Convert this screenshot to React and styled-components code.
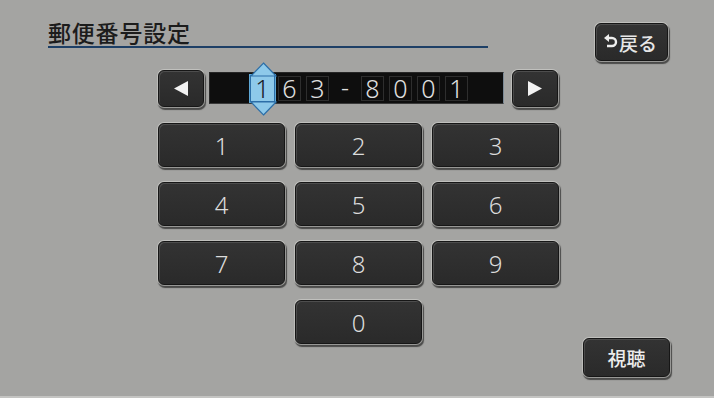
import React from "react";
import styled, { createGlobalStyle } from "styled-components";

const Global = createGlobalStyle`
  html, body { margin: 0; padding: 0; background: #a4a4a2; }
  body { font-family: "Noto Sans CJK JP", "Noto Sans", sans-serif; }
`;

const Screen = styled.div`
  width: 714px;
  height: 398px;
  box-sizing: border-box;
  background: #a4a4a2;
  border-bottom: 2px solid #c4c4c2;
  display: flex;
  flex-direction: column;
  overflow: hidden;
`;

const Header = styled.div`
  display: flex;
  align-items: flex-start;
  padding: 23px 46px 0 48px;
  height: 62px;
  box-sizing: border-box;
`;

const Title = styled.h1`
  margin: -3px 0 0 0;
  width: 440px;
  font-size: 23px;
  line-height: 24px;
  font-weight: 500;
  color: #1c1c1c;
  padding-bottom: 2px;
  border-bottom: 2px solid #1d3f66;
  letter-spacing: 0.8px;
`;

const Button = styled.button`
  appearance: none;
  box-sizing: border-box;
  margin: 0;
  padding: 0;
  border: 1px solid #161616;
  border-radius: 6px;
  background: linear-gradient(#333333, #2a2a2a);
  color: #dedede;
  font-family: "Noto Sans CJK JP", "Noto Sans", sans-serif;
  display: flex;
  align-items: center;
  justify-content: center;
  box-shadow:
    0 0 0 1px rgba(215, 215, 212, 0.55),
    1px 2px 1px 1px rgba(0, 0, 0, 0.55),
    inset 1px 1px 0 rgba(255, 255, 255, 0.13);
`;

const BackButton = styled(Button)`
  margin-left: auto;
  width: 73px;
  height: 38px;
  font-size: 19px;
  font-weight: 500;
  gap: 1px;
  padding-right: 2px;
  color: #e6e6e6;
`;

const Main = styled.div`
  flex: 1;
  display: flex;
  padding-left: 158px;
`;

const Center = styled.div`
  width: 401px;
  display: flex;
  flex-direction: column;
`;

const InputRow = styled.div`
  margin-top: 8px;
  display: flex;
  align-items: flex-start;
  height: 37px;
`;

const ArrowButton = styled(Button)`
  width: 46px;
  height: 37px;
  margin-left: ${(p) => (p.$right ? "8px" : "0")};
`;

const Field = styled.div`
  margin-left: 5px;
  margin-top: 2px;
  width: 295px;
  height: 32px;
  box-sizing: border-box;
  background: #0e0e0e;
  border: 1px solid #262626;
  border-right-color: #7c8a96;
  border-bottom-color: #3a3a3a;
  display: flex;
  align-items: center;
  padding-left: 40px;
  gap: 5px;
`;

const digitFont = `
  font-family: "Noto Sans", sans-serif;
  font-weight: 300;
  font-size: 25px;
  line-height: 24px;
  text-align: center;
`;

const Cell = styled.div`
  position: relative;
  width: ${(p) => (p.$active ? "25px" : "23px")};
  height: ${(p) => (p.$active ? "27px" : "25px")};
  margin-right: ${(p) => (p.$active ? "-2px" : "0")};
  box-sizing: border-box;
  border: 1px solid ${(p) => (p.$active ? "#2d6fa8" : "#2e2e2e")};
  background: ${(p) => (p.$active ? "#8ec9ea" : "transparent")};
  color: ${(p) => (p.$active ? "#182028" : "#e0e0e0")};
  ${digitFont}
  line-height: ${(p) => (p.$active ? "25px" : "23px")};
  ${(p) => (p.$active ? "outline: 1px solid #5fa8d6;" : "")}
`;

const Dash = styled.div`
  width: 22px;
  height: 25px;
  color: #e0e0e0;
  ${digitFont}
  line-height: 23px;
`;

const Spinner = styled.svg`
  position: absolute;
  left: -3px;
  top: -14px;
  pointer-events: none;
`;

const Keypad = styled.div`
  margin-top: 16px;
  display: grid;
  grid-template-columns: repeat(3, 127px);
  grid-auto-rows: 44px;
  column-gap: 10px;
  row-gap: 15px;
`;

const Key = styled(Button)`
  width: 127px;
  height: 44px;
  font-size: 24px;
  font-family: "Noto Sans", sans-serif;
  font-weight: 300;
  color: #dcdcdc;
  grid-column: ${(p) => p.$col || "auto"};
`;

const Side = styled.div`
  margin-left: 24px;
  display: flex;
  align-items: flex-end;
  padding-bottom: 19px;
`;

const WatchButton = styled(Button)`
  width: 87px;
  height: 39px;
  font-size: 19px;
  font-weight: 500;
  color: #ececec;
`;

const Tri = ({ dir }) => (
  <svg width="16" height="17" viewBox="0 0 16 17">
    {dir === "left" ? (
      <polygon points="1,8.5 15,1 15,16" fill="#f2f2f2" />
    ) : (
      <polygon points="15,8.5 1,1 1,16" fill="#f2f2f2" />
    )}
  </svg>
);

const BackIcon = () => (
  <svg width="14" height="16" viewBox="0 0 14 16">
    <polygon points="0,4 5,0 5,8" fill="#eeeeee" />
    <path
      d="M4 4 H8 A4 4 0 0 1 8 12 H3"
      fill="none"
      stroke="#eeeeee"
      strokeWidth="2.4"
    />
  </svg>
);

export default function App() {
  const digits = ["1", "6", "3", "-", "8", "0", "0", "1"];
  return (
    <>
      <Global />
      <Screen>
        <Header>
          <Title>郵便番号設定</Title>
          <BackButton>
            <BackIcon />
            <span>戻る</span>
          </BackButton>
        </Header>
        <Main>
          <Center>
            <InputRow>
              <ArrowButton>
                <Tri dir="left" />
              </ArrowButton>
              <Field>
                {digits.map((d, i) =>
                  d === "-" ? (
                    <Dash key={i}>-</Dash>
                  ) : (
                    <Cell key={i} $active={i === 0}>
                      {d}
                      {i === 0 && (
                        <Spinner width="31" height="54" viewBox="0 0 31 54">
                          <polygon
                            points="15.5,1 28,14 3,14"
                            fill="#8ec9ea"
                            stroke="#2d6fa8"
                            strokeWidth="1.2"
                          />
                          <polygon
                            points="15.5,53 28,40 3,40"
                            fill="#8ec9ea"
                            stroke="#2d6fa8"
                            strokeWidth="1.2"
                          />
                        </Spinner>
                      )}
                    </Cell>
                  )
                )}
              </Field>
              <ArrowButton $right>
                <Tri dir="right" />
              </ArrowButton>
            </InputRow>
            <Keypad>
              {["1", "2", "3", "4", "5", "6", "7", "8", "9"].map((n) => (
                <Key key={n}>{n}</Key>
              ))}
              <Key $col="2">0</Key>
            </Keypad>
          </Center>
          <Side>
            <WatchButton>視聴</WatchButton>
          </Side>
        </Main>
      </Screen>
    </>
  );
}
